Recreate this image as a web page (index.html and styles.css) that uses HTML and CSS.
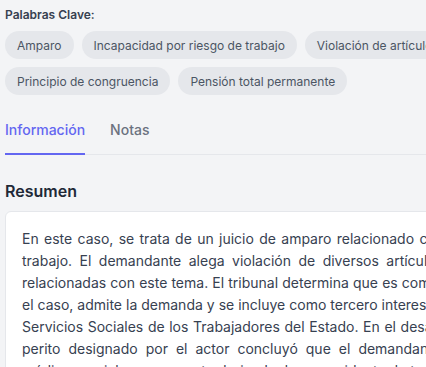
FILE: index.html
```html
<!DOCTYPE html>
<html lang="es">
<head>
<meta charset="utf-8">
<link rel="stylesheet" href="styles.css">
</head>
<body>
<div class="page">
  <section class="keywords">
    <h3 class="kw-title">Palabras Clave:</h3>
    <div class="chips">
      <span class="chip">Amparo</span>
      <span class="chip">Incapacidad por riesgo de trabajo</span>
      <span class="chip">Violación de artículos constitucionales</span>
      <span class="chip">Principio de congruencia</span>
      <span class="chip">Pensión total permanente</span>
    </div>
  </section>
  <nav class="tabs">
    <a class="tab active">Información</a>
    <a class="tab">Notas</a>
  </nav>
  <h2 class="section-title">Resumen</h2>
  <div class="card">
    <p class="summary">En este caso, se trata de un juicio de amparo relacionado con una pensión por riesgo de trabajo. El demandante alega violación de diversos artículos constitucionales y legales relacionadas con este tema. El tribunal determina que es competente para conocer de todo el&nbsp;caso, admite la demanda y se incluye como tercero interesado al Instituto de Seguridad y Servicios Sociales de los Trabajadores del Estado. En el desahogo de la prueba pericial, el perito designado por el actor concluyó que el demandante presenta una incapacidad médica parcial y permanente derivada de un accidente de trabajo.</p>
  </div>
</div>
</body>
</html>
```
FILE: styles.css
```css
html, body {
  margin: 0;
  padding: 0;
  background: #f3f4f6;
}
body {
  font-family: Inter, "Noto Sans", sans-serif;
  color: #374151;
}
.page {
  width: 640px;
  padding: 5px 5px 0 5px;
}
.kw-title {
  margin: 0;
  font-size: 12px;
  font-weight: 600;
  line-height: 20px;
  color: #374151;
}
.chips {
  display: flex;
  flex-wrap: wrap;
  gap: 8px 8px;
  margin-top: 6px;
}
.chip {
  display: inline-flex;
  align-items: center;
  height: 28px;
  padding: 0 12px;
  border-radius: 999px;
  background: #e5e7eb;
  color: #4b5563;
  font-size: 12px;
  white-space: nowrap;
}
.tabs {
  display: flex;
  gap: 25px;
  margin-top: 24px;
  border-bottom: 1px solid #e5e7eb;
}
.tab {
  font-size: 14px;
  font-weight: 500;
  line-height: 22px;
  padding-bottom: 12px;
  margin-bottom: -1px;
  border-bottom: 2px solid transparent;
  color: #6b7280;
}
.tab.active {
  color: #6366f1;
  border-bottom-color: #6366f1;
}
.section-title {
  margin: 24px 0 8px;
  font-size: 16px;
  font-weight: 600;
  line-height: 24px;
  color: #1f2937;
}
.card {
  background: #ffffff;
  border: 1px solid #e5e7eb;
  border-radius: 6px;
  padding: 16px;
}
.summary {
  margin: 0;
  font-size: 14px;
  line-height: 22px;
  text-align: justify;
  color: #374151;
}
```
